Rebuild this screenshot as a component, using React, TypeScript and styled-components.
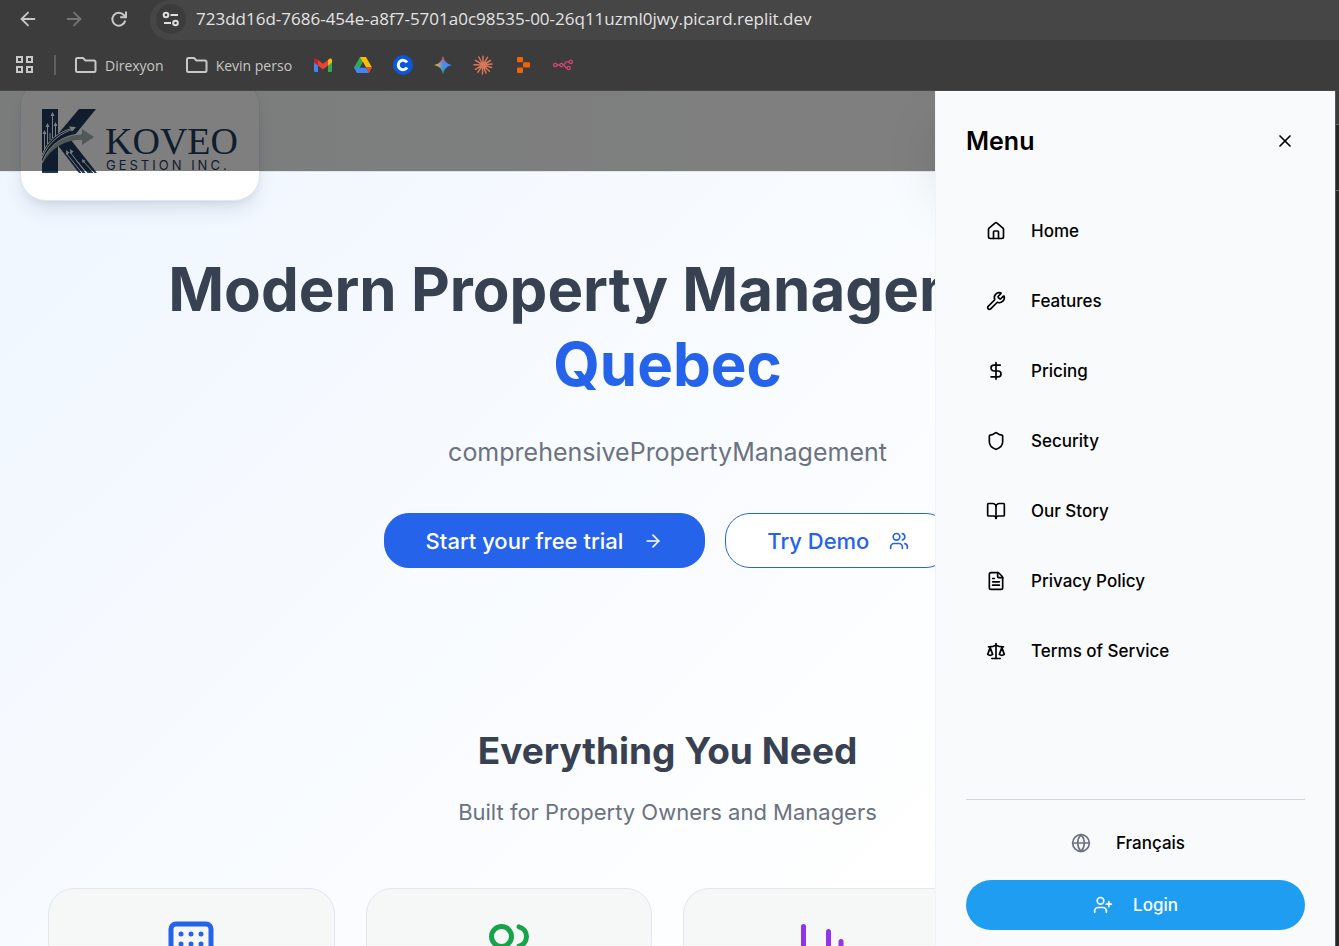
import React from "react";
import styled, { createGlobalStyle } from "styled-components";
import {
  ArrowLeft, ArrowRight, X, House, Wrench, DollarSign, Shield, BookOpen, FileText, Scale,
  Globe, UserPlus, Users, Building, ChartColumn,
} from "lucide-react";

const inter = `Inter, "Liberation Sans", sans-serif`;
const chrome = `"Open Sans", "Noto Sans", sans-serif`;

const Global = createGlobalStyle`
  *, *::before, *::after { box-sizing: border-box; }
  html, body, #root { height: 100%; }
  body { margin: 0; background: #3c3c3c; font-family: ${inter}; overflow: hidden; }
  h1, h2, p, ul { margin: 0; padding: 0; }
  button, input { font: inherit; border: 0; background: none; padding: 0; color: inherit; }
  a { color: inherit; text-decoration: none; }
  svg { display: block; flex: none; }
`;

const Shell = styled.div`
  height: 100%;
  display: flex;
  flex-direction: column;
`;

const AddressRow = styled.div`
  height: 40px;
  flex: none;
  display: flex;
  color: #c7c7c7;
  font-family: ${chrome};
`;
const NavButtons = styled.div`
  width: 150px;
  height: 37px;
  padding-left: 17px;
  display: flex;
  align-items: center;
  gap: 24px;
`;
const IconButton = styled.button<{ $color: string }>`
  display: block;
  color: ${(p) => p.$color};
`;
const AddressBar = styled.label`
  flex: 1;
  height: 40px;
  padding: 0 0 2px 6px;
  display: flex;
  align-items: center;
  gap: 10px;
  background: #464646;
  border-radius: 20px 0 0 20px;
`;
const SiteInfo = styled.span`
  width: 30px;
  height: 30px;
  border-radius: 50%;
  background: #3c3c3c;
  display: grid;
  place-items: center;
`;
const AddressInput = styled.input`
  flex: 1;
  min-width: 0;
  outline: 0;
  font-size: 17px;
  line-height: 24px;
  color: #e3e3e3;
`;
const Bookmarks = styled.nav`
  height: 51px;
  flex: none;
  padding-left: 14px;
  display: flex;
  align-items: center;
  gap: 20px;
  border-bottom: 1px solid #484848;
  font-family: ${chrome};
  font-size: 14px;
  color: #c7c7c7;
`;
const Divider = styled.span`
  width: 2px;
  height: 20px;
  margin-right: -2px;
  background: #606060;
`;
const Bookmark = styled.a`
  display: flex;
  align-items: center;
  gap: 8px;
`;
const FolderBookmark = styled(Bookmark)`
  padding-right: 1px;
`;

const Viewport = styled.div`
  flex: 1;
  min-height: 0;
  display: flex;
  background: #282828;
`;
const Page = styled.main`
  flex: 1;
  min-width: 0;
  position: relative;
  overflow: hidden;
  background: linear-gradient(135deg, #eff6ff 0%, #ffffff 78%);
`;
const SideStrip = styled.aside`
  width: 4px;
  flex: none;
  border-left: 1px solid #5a5a5a;
`;
const StripSection = styled.div<{ $height: number; $color: string }>`
  height: ${(p) => p.$height}px;
  background: ${(p) => p.$color};
  border-bottom: 1px solid #6a6a6a;
`;

const Header = styled.header`
  height: 81px;
  padding-left: 20px;
  position: relative;
  background: linear-gradient(90deg, #f5f9f9, #ffffff 60%);
  border-bottom: 1px solid #dfe8ee;
`;
const HeaderInner = styled.div`
  display: flow-root;
  height: 80px;
`;
const HeaderShade = styled.div`
  position: absolute;
  inset: 0;
  background: rgba(0, 0, 0, 0.5);
`;
const DrawerShadow = styled.div`
  position: absolute;
  inset: 0 0 0 auto;
  width: 400px;
  box-shadow: 0 30px 60px -15px rgba(0, 0, 0, 0.25);
`;
const LogoCard = styled.a`
  display: block;
  width: 240px;
  height: 121px;
  margin-top: -11px;
  padding: 27px 21px;
  background: #fff;
  border: 1px solid #e2e8ee;
  border-radius: 26px;
  box-shadow: 0 12px 20px -4px rgba(20, 40, 80, 0.12), 0 4px 8px -4px rgba(20, 40, 80, 0.1);
`;

const Hero = styled.section`
  padding: 80px 20px 0;
  text-align: center;
`;
const HeroTitle = styled.h1`
  font-size: 60px;
  line-height: 75px;
  font-weight: 700;
  color: #374151;
  em { font-style: normal; color: #2563eb; display: block; }
`;
const HeroText = styled.p`
  margin-top: 30px;
  font-size: 25px;
  line-height: 40px;
  color: #6b7280;
`;
const Actions = styled.div`
  margin-top: 41px;
  display: flex;
  justify-content: center;
  gap: 20px;
`;
const Action = styled.button<{ $outline?: boolean }>`
  height: 55px;
  padding: 0 41px;
  display: flex;
  align-items: center;
  gap: 20px;
  border-radius: 25px;
  font-size: 22px;
  font-weight: 500;
  white-space: nowrap;
  border: 1px solid #2563eb;
  background: ${(p) => (p.$outline ? "#fff" : "#2563eb")};
  color: ${(p) => (p.$outline ? "#2563eb" : "#fff")};
`;

const Features = styled.section`
  padding: 160px 48px 0;
  text-align: center;
`;
const FeaturesTitle = styled.h2`
  font-size: 37px;
  line-height: 46px;
  font-weight: 700;
  color: #374151;
`;
const FeaturesText = styled.p`
  margin-top: 20px;
  font-size: 22px;
  line-height: 36px;
  color: #6b7280;
`;
const Cards = styled.div`
  margin-top: 58px;
  display: grid;
  grid-template-columns: repeat(4, 1fr);
  gap: 31px;
`;
const Card = styled.article<{ $color: string }>`
  height: 260px;
  padding: 30px;
  display: flex;
  justify-content: center;
  background: #f6f8f8;
  border: 1px solid #dfe8ef;
  border-radius: 26px;
  color: ${(p) => p.$color};
`;

const Drawer = styled.aside`
  position: absolute;
  top: 0;
  right: 0;
  bottom: 0;
  width: 400px;
  padding: 30px 30px 16px;
  display: flex;
  flex-direction: column;
  background: #f9fafc;
  border-left: 1px solid #f0f3f7;
  color: #000;
  font-size: 17px;
  line-height: 22px;
  font-weight: 500;
`;
const DrawerHead = styled.div`
  height: 40px;
  display: flex;
  align-items: center;
  justify-content: space-between;
  padding-right: 10px;
`;
const DrawerTitle = styled.h2`
  font-size: 25px;
  line-height: 35px;
  font-weight: 600;
`;
const MenuList = styled.ul`
  flex: 1;
  margin-top: 40px;
  list-style: none;
  display: flex;
  flex-direction: column;
  gap: 10px;
`;
const MenuLink = styled.a`
  height: 60px;
  padding-left: 20px;
  display: flex;
  align-items: center;
  gap: 25px;
`;
const DrawerFoot = styled.div`
  padding-top: 18px;
  border-top: 1px solid #d1d5db;
  display: flex;
  flex-direction: column;
  gap: 12px;
`;
const LanguageButton = styled.button`
  height: 50px;
  padding-right: 15px;
  display: flex;
  align-items: center;
  justify-content: center;
  gap: 25px;
`;
const LoginButton = styled.button`
  height: 50px;
  display: flex;
  align-items: center;
  justify-content: center;
  gap: 20px;
  border-radius: 25px;
  background: #1f9df1;
  color: #fff;
`;

const ReloadIcon = () => (
  <svg width="20" height="20" viewBox="0 0 20 20" fill="none" stroke="currentColor" strokeWidth="2">
    <path d="M16.200 11.500A6.500 6.500 0 1 1 14.800 6L16.500 7.800" />
    <path d="M17 2.500v5.800h-5.800" />
  </svg>
);
const TuneIcon = () => (
  <svg width="18" height="18" viewBox="0 0 18 18" fill="none" stroke="#dedede" strokeWidth="2">
    <circle cx="4" cy="5" r="2.300" /><path d="M8.500 5H16M2 13h7" /><circle cx="13.500" cy="13" r="2.300" />
  </svg>
);
const AppsIcon = () => (
  <svg width="20" height="20" viewBox="0 0 20 20" fill="none" stroke="#c7c7c7" strokeWidth="2">
    <path d="M3 2h5v5H3zM13 2h5v5h-5zM3 12h5v5H3zM13 12h5v5h-5z" />
  </svg>
);
const FolderIcon = () => (
  <svg width="23" height="18" viewBox="0 0 23 18" fill="none" stroke="#c7c7c7" strokeWidth="2" strokeLinejoin="round">
    <path d="M2 3.500A1.500 1.500 0 0 1 3.500 2H9l2.500 2.500h8.500A1.500 1.500 0 0 1 21.500 6v8.500A1.500 1.500 0 0 1 20 16H3.500A1.500 1.500 0 0 1 2 14.500z" />
  </svg>
);
const GmailIcon = () => (
  <svg width="20" height="20" viewBox="0 0 20 20">
    <path d="M1 5v10.500a1.500 1.500 0 0 0 1.500 1.500H5V8z" fill="#4285f4" />
    <path d="M19 5v10.500a1.500 1.500 0 0 1-1.500 1.500H15V8z" fill="#34a853" />
    <path d="M15 5l1.500-1.200C17.700 3 19 3.600 19 5v2.500l-4 3z" fill="#fbbc04" />
    <path d="M5 10.500V5l5 3.800L15 5v5.500l-5 3.800z" fill="#ea4335" />
    <path d="M1 5c0-1.400 1.300-2 2.500-1.200L5 5v5.500l-4-3z" fill="#c5221f" />
  </svg>
);
const DriveIcon = () => (
  <svg width="20" height="20" viewBox="0 0 20 20">
    <path d="M7 2h6l-3 5.200L4.200 17.500 1 12.500z" fill="#34a853" />
    <path d="M7 2h6l6 10.500h-6z" fill="#fbbc04" />
    <path d="M1 12.500h12L16 18H4z" fill="#4285f4" />
    <path d="M13 12.500h6L16 18z" fill="#ea4335" />
    <path d="M10 7.200L13 12.500H7z" fill="#3c3c3c" />
  </svg>
);
const CIcon = () => (
  <svg width="20" height="20" viewBox="0 0 20 20">
    <circle cx="10" cy="10" r="10" fill="#0b57dc" />
    <path d="M14 7.600a4.700 4.700 0 1 0 0 4.800" fill="none" stroke="#fff" strokeWidth="3" />
  </svg>
);
const GeminiIcon = () => (
  <svg width="20" height="20" viewBox="0 0 20 20">
    <defs>
      <linearGradient id="sparkSide" x1="0" x2="1">
        <stop offset=".05" stopColor="#fbbc04" /><stop offset=".5" stopColor="#4b8df8" /><stop offset="1" stopColor="#3186ff" />
      </linearGradient>
      <linearGradient id="sparkTips" x1="0" x2="0" y1="0" y2="1">
        <stop offset="0" stopColor="#f4453c" /><stop offset=".45" stopColor="#f4453c" stopOpacity="0" />
        <stop offset=".6" stopColor="#12a85a" stopOpacity="0" /><stop offset="1" stopColor="#12a85a" />
      </linearGradient>
    </defs>
    <path d="M10 1c1 5 4 8 9 9-5 1-8 4-9 9-1-5-4-8-9-9 5-1 8-4 9-9z" fill="url(#sparkSide)" />
    <path d="M10 1c1 5 4 8 9 9-5 1-8 4-9 9-1-5-4-8-9-9 5-1 8-4 9-9z" fill="url(#sparkTips)" />
  </svg>
);
const BurstIcon = () => (
  <svg width="20" height="20" viewBox="0 0 20 20" stroke="#d97757" strokeWidth="1.500" strokeLinecap="round">
    <path d="M10 10V1.200M10 10l4.500-7.600M10 10l7.400-4.500M10 10l9-1M10 10l8.600 2.500M10 10l6.400 6.300M10 10l3 8M10 10l-.6 9M10 10l-5.200 7.200M10 10l-7.600 4.300M10 10l-9-.2M10 10L2.500 5.300M10 10L5.800 2" />
  </svg>
);
const ReplitIcon = () => (
  <svg width="20" height="20" viewBox="0 0 20 20" fill="#f26207">
    <rect x="4" y="2" width="6" height="5.300" rx="1" /><rect x="10" y="7.300" width="7" height="5.300" rx="1" /><rect x="4" y="12.600" width="6" height="5.300" rx="1" />
  </svg>
);
const NodesIcon = () => (
  <svg width="20" height="20" viewBox="0 0 20 20" fill="none" stroke="#d6426f" strokeWidth="1.300">
    <circle cx="2.300" cy="10" r="1.700" /><circle cx="8.500" cy="10" r="1.700" /><circle cx="17.700" cy="6.800" r="1.700" /><circle cx="15.700" cy="13" r="1.700" />
    <path d="M4 10h2.800M10.200 10c2.500 0 1-3.200 3.500-3.200H16M10.200 10c2.500 0 1.300 3 3.800 3" />
  </svg>
);

const Logo = () => (
  <svg width="198" height="66" viewBox="0 0 198 66" role="img" aria-label="Koveo Gestion Inc.">
    <g fill="#1f3a5c">
      <path d="M0 1h16v64H0z" />
      <path d="M37 1h17L28 33 16 36V26z" />
      <path d="M14 35l15-3 26 33H37z" />
    </g>
    <g stroke="#fff" fill="none" strokeWidth="1">
      <path d="M2.500 42V25M5.500 36V18M8 32V25M10.500 30V7M13.500 28V17M0 50C6 34 20 24 32 21M0 47C6 31 18 24 28 21M24 45l16 20M28 44l16 21M34 52l11 13M42 54l10 11" />
    </g>
    <g fill="#fff">
      <path d="M10.500 4l-2 4h4zM5.500 15l-2 4h4zM2.500 22l-2 4h4zM13.500 14l-2 4h4zM34 19l-7-.5 3 5zM24 42l.5 5 3-2.500zM28 41l.5 5 3-2.500zM40 51l.5 4 3-2z" />
    </g>
    <path d="M0 57C6 38 20 27 40 26v-5l12 8-12 8v-5C24 31 8 40 0 57z" fill="#a3b0b0" />
    <path d="M0 55C6 38 20 27 39 26" fill="none" stroke="#fff" />
    <text x="63" y="46" fontFamily='"Liberation Serif", serif' fontSize="38" fill="#1f3a5c">KOVEO</text>
    <text x="64" y="62" fontFamily={inter} fontSize="13" letterSpacing="3" fill="#1f3a5c">GESTION INC.</text>
  </svg>
);

const menu = [
  ["Home", House], ["Features", Wrench], ["Pricing", DollarSign], ["Security", Shield],
  ["Our Story", BookOpen], ["Privacy Policy", FileText], ["Terms of Service", Scale],
] as const;

const shortcuts = [
  ["Gmail", GmailIcon], ["Drive", DriveIcon], ["Contacts", CIcon], ["Gemini", GeminiIcon],
  ["Claude", BurstIcon], ["Replit", ReplitIcon], ["n8n", NodesIcon],
] as const;

export default function App() {
  return (
    <Shell>
      <Global />
      <AddressRow>
        <NavButtons>
          <IconButton aria-label="Back" $color="#c7c7c7"><ArrowLeft size={22} /></IconButton>
          <IconButton aria-label="Forward" $color="#757575"><ArrowRight size={22} /></IconButton>
          <IconButton aria-label="Reload" $color="#c7c7c7"><ReloadIcon /></IconButton>
        </NavButtons>
        <AddressBar>
          <SiteInfo><TuneIcon /></SiteInfo>
          <AddressInput aria-label="Address" defaultValue="723dd16d-7686-454e-a8f7-5701a0c98535-00-26q11uzml0jwy.picard.replit.dev" />
        </AddressBar>
      </AddressRow>
      <Bookmarks>
        <AppsIcon />
        <Divider />
        <FolderBookmark href="#"><FolderIcon />Direxyon</FolderBookmark>
        <FolderBookmark href="#"><FolderIcon />Kevin perso</FolderBookmark>
        {shortcuts.map(([name, Icon]) => <Bookmark key={name} href="#" aria-label={name}><Icon /></Bookmark>)}
      </Bookmarks>
      <Viewport>
        <Page>
          <Header>
            <HeaderInner>
              <LogoCard href="#"><Logo /></LogoCard>
            </HeaderInner>
            <HeaderShade />
            <DrawerShadow />
          </Header>
          <Hero>
            <HeroTitle>Modern Property Management for <em>Quebec</em></HeroTitle>
            <HeroText>comprehensivePropertyManagement</HeroText>
            <Actions>
              <Action>Start your free trial <ArrowRight size={20} /></Action>
              <Action $outline>Try Demo <Users size={20} /></Action>
            </Actions>
          </Hero>
          <Features>
            <FeaturesTitle>Everything You Need</FeaturesTitle>
            <FeaturesText>Built for Property Owners and Managers</FeaturesText>
            <Cards>
              <Card $color="#2563eb"><Building size={60} /></Card>
              <Card $color="#16a34a"><Users size={60} /></Card>
              <Card $color="#9333ea"><ChartColumn size={60} /></Card>
              <Card $color="#dc2626"><Shield size={60} /></Card>
            </Cards>
          </Features>
          <Drawer>
            <DrawerHead>
              <DrawerTitle>Menu</DrawerTitle>
              <IconButton aria-label="Close menu" $color="#000"><X size={20} /></IconButton>
            </DrawerHead>
            <MenuList>
              {menu.map(([label, Icon]) => (
                <li key={label}><MenuLink href="#"><Icon size={20} />{label}</MenuLink></li>
              ))}
            </MenuList>
            <DrawerFoot>
              <LanguageButton><Globe size={20} color="#6b7280" />Français</LanguageButton>
              <LoginButton><UserPlus size={20} />Login</LoginButton>
            </DrawerFoot>
          </Drawer>
        </Page>
        <SideStrip>
          <StripSection $height={34} $color="#3c3c3c" />
          <StripSection $height={66} $color="#282828" />
        </SideStrip>
      </Viewport>
    </Shell>
  );
}
